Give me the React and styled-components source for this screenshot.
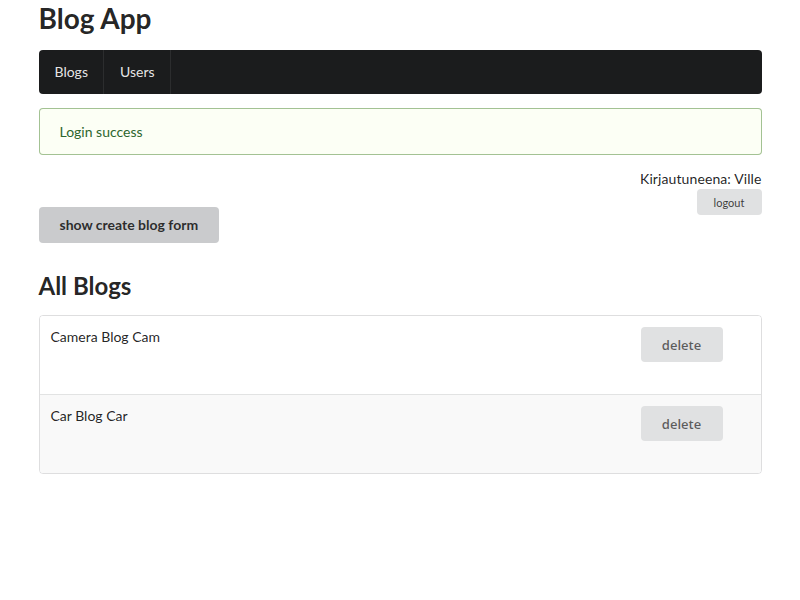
import React from "react";
import styled, { createGlobalStyle } from "styled-components";

const Global = createGlobalStyle`
  html, body { margin: 0; padding: 0; background: #fff; }
  body {
    font-family: Lato, "Helvetica Neue", Arial, sans-serif;
    font-size: 14px;
    line-height: 1.4285em;
    color: rgba(0,0,0,.87);
  }
`;

const Container = styled.div`
  width: 723px;
  margin: 0 auto;
`;

const Title = styled.h1`
  font-family: Lato, sans-serif;
  font-size: 28px;
  font-weight: 700;
  line-height: 36px;
  margin: 0 0 14px;
`;

const Menu = styled.nav`
  display: flex;
  height: 44px;
  background: #1b1c1d;
  border-radius: 4px;
  margin-bottom: 14px;
`;

const MenuItem = styled.a`
  display: flex;
  align-items: center;
  padding: 0 15px 0 16px;
  color: rgba(255,255,255,.9);
  font-size: 14px;
  border-right: 1px solid rgba(255,255,255,.08);
  cursor: pointer;
`;

const Message = styled.div`
  background: #fcfff5;
  color: #2c662d;
  box-shadow: inset 0 0 0 1px #a3c293;
  border-radius: 4px;
  padding: 14px 21px 13px;
  line-height: 20px;
  margin-bottom: 14px;
`;

const UserInfo = styled.div`
  text-align: right;
  line-height: 20px;
  letter-spacing: 0.1px;
`;

const Button = styled.button`
  font-family: Lato, sans-serif;
  border: none;
  border-radius: 4px;
  cursor: pointer;
  font-weight: 700;
  background: ${(p) => (p.$active ? "#cacbcd" : "#e0e1e2")};
  color: rgba(0,0,0,.8);
  font-size: 14px;
  line-height: 1em;
  padding: 11px 21px;
`;

const LogoutButton = styled(Button)`
  float: right;
  font-size: 11px;
  font-weight: 400;
  height: 26px;
  width: 65px;
  padding: 0;
  letter-spacing: 0;
  color: rgba(0,0,0,.75);
`;

const ToggleArea = styled.div`
  padding-top: 18px;
`;

const Heading = styled.h2`
  font-family: Lato, sans-serif;
  font-size: 24px;
  font-weight: 700;
  line-height: 31px;
  margin: 27px 0 14px;
`;

const Table = styled.div`
  border: 1px solid rgba(34,36,38,.15);
  border-radius: 4px;
  overflow: hidden;
`;

const Row = styled.div`
  display: grid;
  grid-template-columns: 1fr 82px;
  column-gap: 11px;
  height: 67px;
  padding: 11px 38px 0 11px;
  background: ${(p) => (p.$striped ? "#f9f9f9" : "#fff")};
  & + & { border-top: 1px solid rgba(34,36,38,.1); }
`;

const BlogTitle = styled.div`
  line-height: 20px;
`;

const DeleteButton = styled.button`
  font-family: "Open Sans", sans-serif;
  font-size: 13px;
  font-weight: 600;
  color: rgba(0,0,0,.6);
  background: #e0e1e2;
  border: none;
  border-radius: 4px;
  height: 35px;
  width: 82px;
  cursor: pointer;
  align-self: start;
`;

const blogs = ["Camera Blog Cam", "Car Blog Car"];

export default function App() {
  return (
    <Container>
      <Global />
      <Title>Blog App</Title>
      <Menu>
        <MenuItem>Blogs</MenuItem>
        <MenuItem>Users</MenuItem>
      </Menu>
      <Message>Login success</Message>
      <UserInfo>
        Kirjautuneena: Ville
        <br />
        <LogoutButton>logout</LogoutButton>
      </UserInfo>
      <ToggleArea>
        <Button $active>show create blog form</Button>
      </ToggleArea>
      <Heading>All Blogs</Heading>
      <Table>
        {blogs.map((b, i) => (
          <Row key={b} $striped={i % 2 === 1}>
            <BlogTitle>{b}</BlogTitle>
            <DeleteButton>delete</DeleteButton>
          </Row>
        ))}
      </Table>
    </Container>
  );
}
